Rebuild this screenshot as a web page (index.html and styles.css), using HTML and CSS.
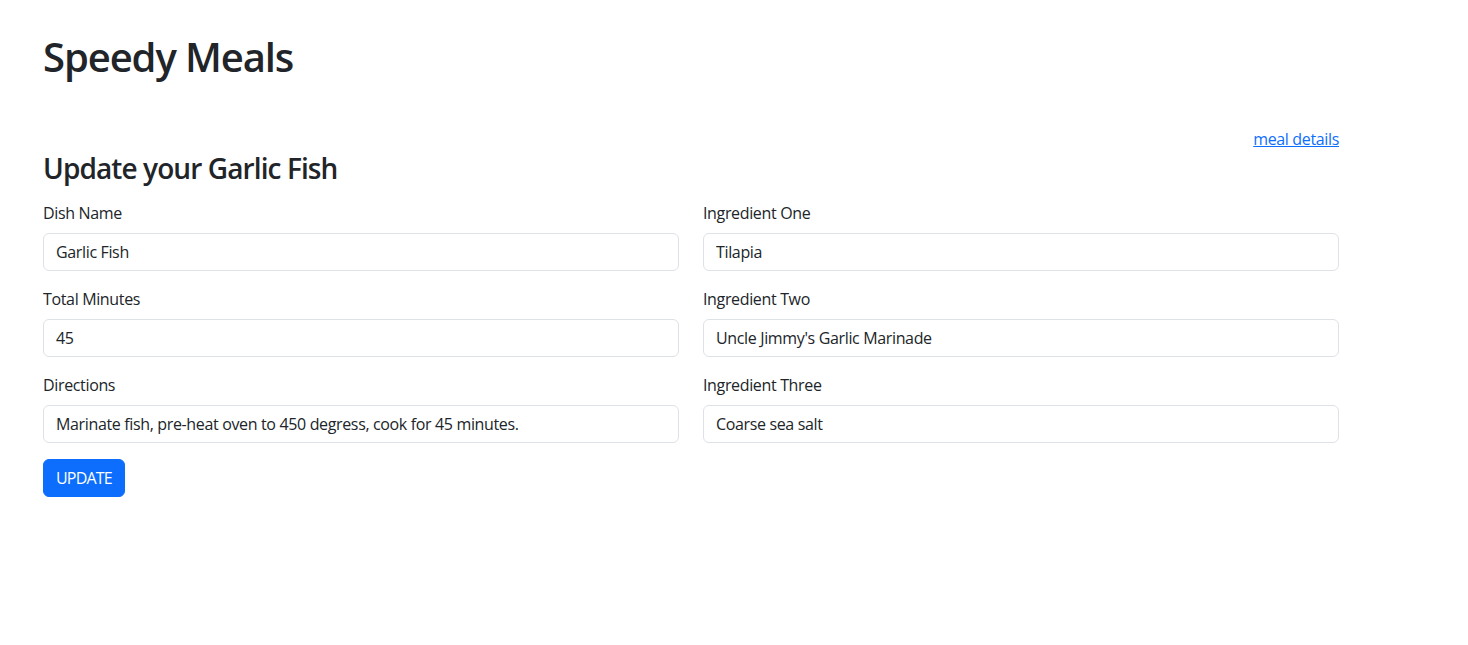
FILE: index.html
```html
<!DOCTYPE html>
<html lang="en">
<head>
<meta charset="utf-8">
<title>Speedy Meals</title>
<link rel="stylesheet" href="styles.css">
</head>
<body>
<div class="page">
  <h1 class="title">Speedy Meals</h1>
  <div class="link-row"><a href="#" class="details-link">meal details</a></div>
  <h3 class="subtitle">Update your Garlic Fish</h3>
  <form class="form-grid">
    <div class="col">
      <div class="field">
        <label class="label">Dish Name</label>
        <input class="input" type="text" value="Garlic Fish">
      </div>
      <div class="field">
        <label class="label">Total Minutes</label>
        <input class="input" type="text" value="45">
      </div>
      <div class="field">
        <label class="label">Directions</label>
        <input class="input" type="text" value="Marinate fish, pre-heat oven to 450 degress, cook for 45 minutes.">
      </div>
      <button type="button" class="btn">UPDATE</button>
    </div>
    <div class="col">
      <div class="field">
        <label class="label">Ingredient One</label>
        <input class="input" type="text" value="Tilapia">
      </div>
      <div class="field">
        <label class="label">Ingredient Two</label>
        <input class="input" type="text" value="Uncle Jimmy's Garlic Marinade">
      </div>
      <div class="field">
        <label class="label">Ingredient Three</label>
        <input class="input" type="text" value="Coarse sea salt">
      </div>
    </div>
  </form>
</div>
</body>
</html>
```
FILE: styles.css
```css
* { box-sizing: border-box; }
html, body { margin: 0; padding: 0; background: #fff; }
body {
  font-family: "Open Sans", "Noto Sans", sans-serif;
  font-size: 16px;
  line-height: 24px;
  letter-spacing: -0.35px;
  color: #212529;
}
.page {
  width: 1296px;
  margin-left: 43px;
  padding-top: 33px;
}
.title {
  margin: 0;
  font-size: 40px;
  line-height: 48px;
  font-weight: 600;
  letter-spacing: -1.1px;
}
.link-row {
  margin-top: 46px;
  text-align: right;
}
.details-link {
  color: #0d6efd;
  text-decoration: underline;
}
.subtitle {
  margin: 0 0 16px;
  font-size: 28px;
  line-height: 34px;
  font-weight: 600;
  letter-spacing: -0.9px;
}
.form-grid {
  display: grid;
  grid-template-columns: 1fr 1fr;
  column-gap: 24px;
}
.field { margin-bottom: 16px; }
.label {
  display: block;
  margin-bottom: 8px;
}
.input {
  display: block;
  width: 100%;
  height: 38px;
  padding: 6px 12px;
  font: inherit;
  letter-spacing: inherit;
  color: #212529;
  border: 1px solid #dee2e6;
  border-radius: 6px;
  background: #fff;
}
.btn {
  display: inline-block;
  height: 38px;
  padding: 6px 12px;
  font: inherit;
  letter-spacing: -0.8px;
  color: #fff;
  background: #0d6efd;
  border: 1px solid #0d6efd;
  border-radius: 6px;
}
```
